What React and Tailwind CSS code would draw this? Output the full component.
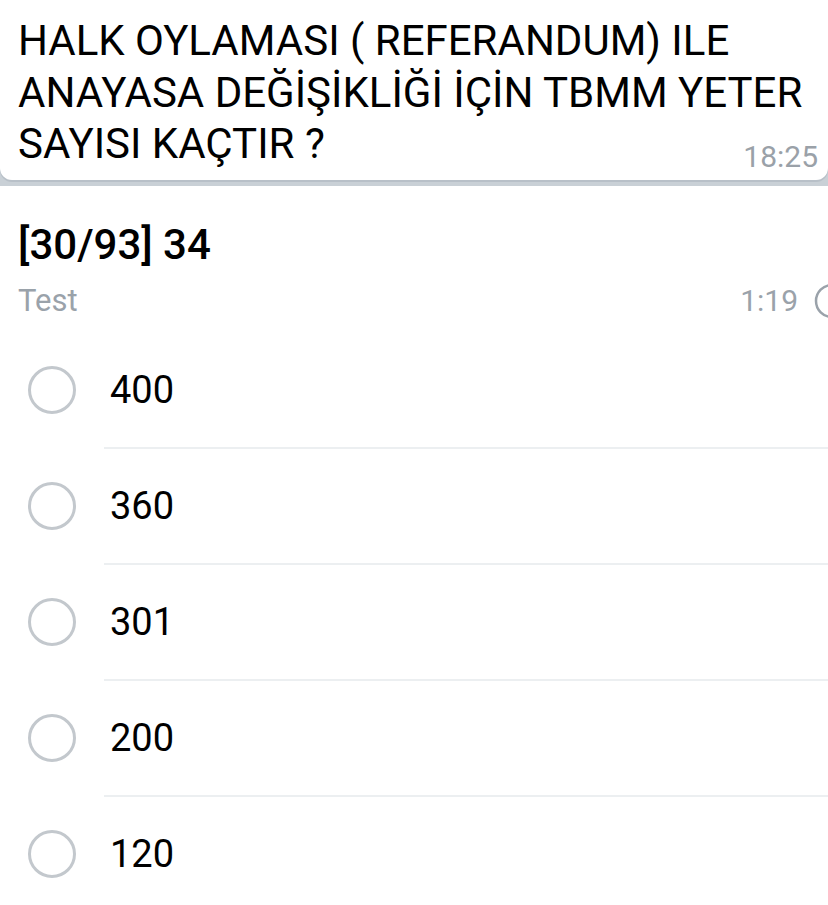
import React from 'react'

const options = ['400', '360', '301', '200', '120']

const Radio = () => (
  <div className="w-[48px] h-[48px] rounded-full border-[3px] border-[#c3c8cd] shrink-0" />
)

const App = () => {
  return (
    <div className="w-[828px] h-[905px] overflow-hidden bg-[#c9d0d6] font-['Roboto',sans-serif] text-black">
      {/* question bubble */}
      <div className="h-[180px] bg-white rounded-b-[12px] pl-[18px] pr-[10px] pt-[15px] shadow-[0_2px_0_#b8c0c8]">
        <div className="text-[42px] leading-[52px] whitespace-nowrap">HALK OYLAMASI ( REFERANDUM) ILE</div>
        <div className="text-[42px] leading-[52px] whitespace-nowrap">ANAYASA DEĞİŞİKLİĞİ İÇİN TBMM YETER</div>
        <div className="flex items-end justify-between">
          <span className="text-[42px] leading-[50px] whitespace-nowrap">SAYISI KAÇTIR ?</span>
          <span className="text-[30px] leading-[36px] text-[#9aa1a8] mb-[-6px]">18:25</span>
        </div>
      </div>

      {/* poll */}
      <div className="mt-[6px] bg-white h-[719px]">
        <div className="pl-[18px] pt-[35px] h-[147px]">
          <div className="text-[42px] leading-[48px] font-medium">[30/93] 34</div>
          <div className="flex items-center justify-between mt-[12px]">
            <span className="text-[31px] leading-[40px] text-[#9aa2aa]">Test</span>
            <div className="flex items-center gap-[14px] text-[30px] leading-[40px] text-[#9aa2aa]">
              <span>1:19</span>
              <svg width="16" height="40" viewBox="0 0 16 40" className="shrink-0">
                <circle cx="20" cy="20" r="16" fill="none" stroke="#9aa2aa" strokeWidth="2.5" />
              </svg>
            </div>
          </div>
        </div>

        {options.map((opt, i) => (
          <div key={opt}>
            <div className="h-[114px] flex items-center pl-[28px]">
              <Radio />
              <span className="ml-[34px] text-[38px] leading-[44px]">{opt}</span>
            </div>
            {i < options.length - 1 && <div className="ml-[104px] h-[2px] bg-[#eceff1]" />}
          </div>
        ))}
      </div>
    </div>
  )
}

export default App
